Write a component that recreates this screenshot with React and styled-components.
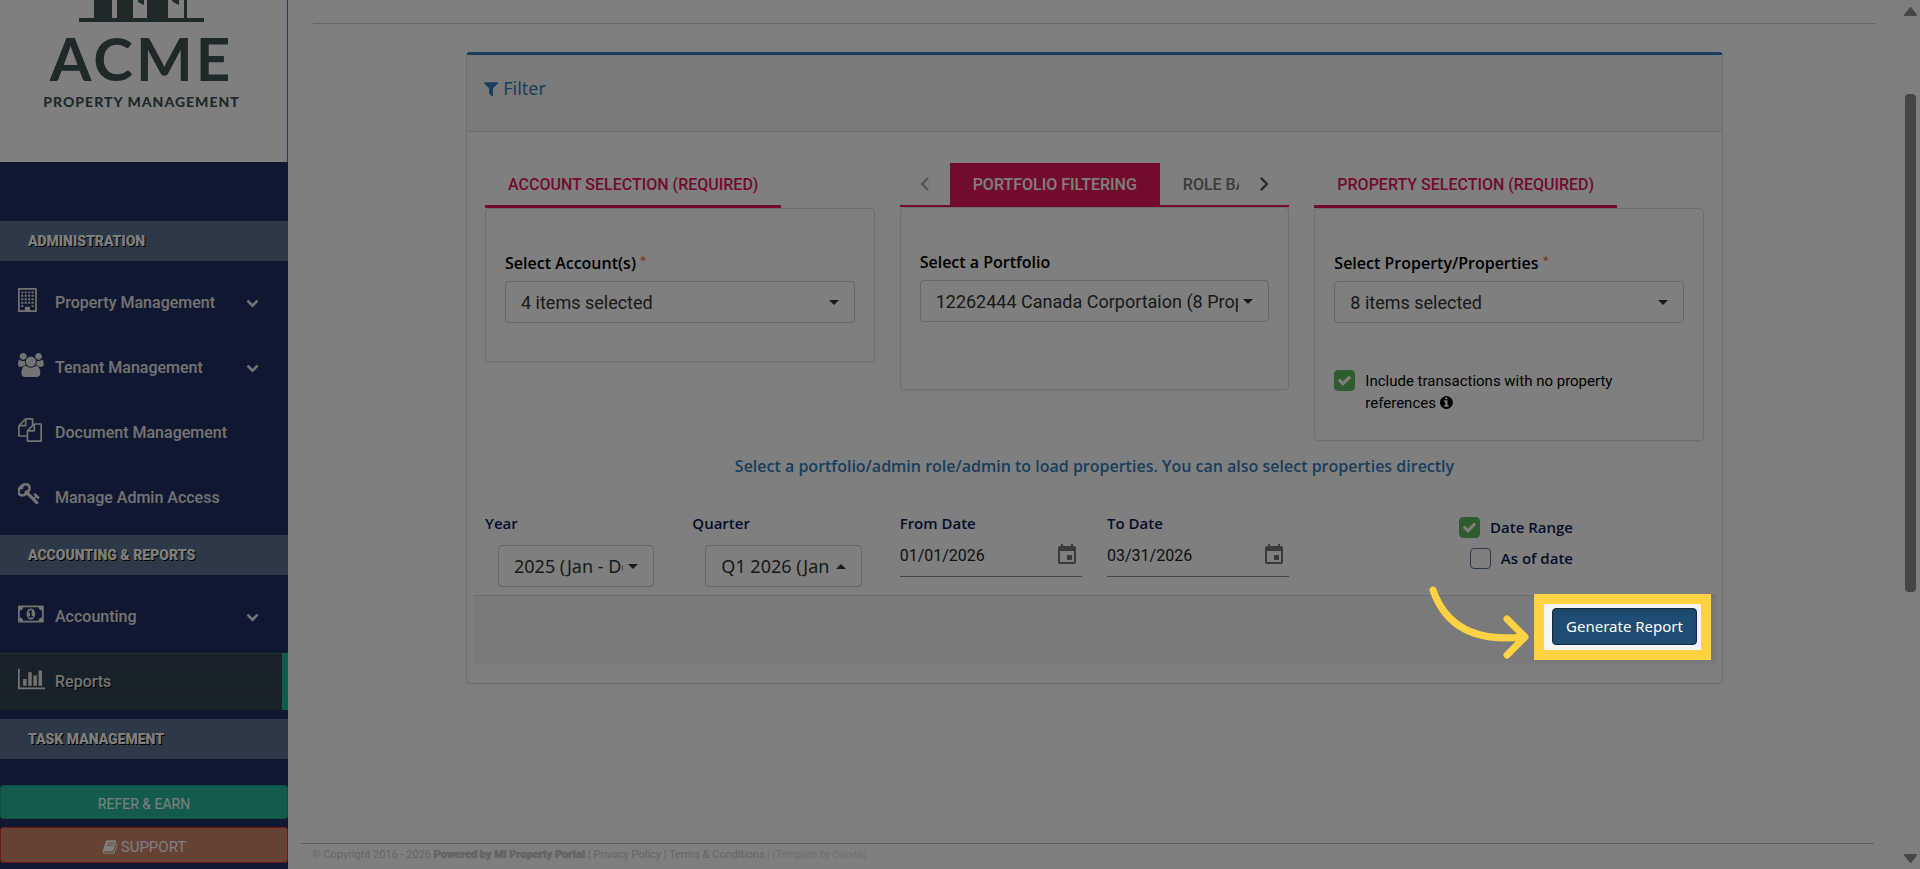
import React, { useState } from "react";
import styled, { createGlobalStyle } from "styled-components";

const GlobalStyle = createGlobalStyle`
    * {
        box-sizing: border-box;
    }

    body {
        margin: 0;
        background: #FFF;
        color: #333;
        font-family: Roboto, "Liberation Sans", sans-serif;
        font-size: 16px;
    }

    button, input, select {
        font: inherit;
        color: inherit;
    }
`;

const humanist = `"Noto Sans", "Open Sans", sans-serif`;
const humanistBold = `"Open Sans", "Noto Sans", sans-serif`;

const icons = {
    building: ["0 0 1408 1792", "M64 0h1280q26 0 45 19t19 45v1664q0 26-19 45t-45 19H64q-26 0-45-19t-19-45V64q0-26 19-45T64 0zM128 128v1536h384v-224q0-32 32-32h320q32 0 32 32v224h384V128zM240 256h160v144H240zM496 256h160v144H496zM752 256h160v144H752zM1008 256h160v144h-160zM240 512h160v144H240zM496 512h160v144H496zM752 512h160v144H752zM1008 512h160v144h-160zM240 768h160v144H240zM496 768h160v144H496zM752 768h160v144H752zM1008 768h160v144h-160zM240 1024h160v144H240zM496 1024h160v144H496zM752 1024h160v144H752zM1008 1024h160v144h-160zM240 1280h160v144H240zM1008 1280h160v144h-160z"],
    users: ["0 0 1920 1792", "M593 896q-162 5-265 128h-134q-82 0-138-40.5t-56-118.5q0-353 124-353 6 0 43.5 21t97.5 42.5 119 21.5q67 0 133-23-5 37-5 66 0 139 81 256zm1071 637q0 120-73 189.5t-194 69.5h-874q-121 0-194-69.5t-73-189.5q0-53 3.5-103.5t14-109 26.5-108.5 43-97.5 62-81 85.5-53.5 111.5-20q10 0 43 21.5t73 48 107 48 135 21.5 135-21.5 107-48 73-48 43-21.5q61 0 111.5 20t85.5 53.5 62 81 43 97.5 26.5 108.5 14 109 3.5 103.5zm-1024-1277q0 106-75 181t-181 75-181-75-75-181 75-181 181-75 181 75 75 181zm704 384q0 159-112.5 271.5t-271.5 112.5-271.5-112.5-112.5-271.5 112.5-271.5 271.5-112.5 271.5 112.5 112.5 271.5zm576 225q0 78-56 118.5t-138 40.5h-134q-103-123-265-128 81-117 81-256 0-29-5-66 66 23 133 23 59 0 119-21.5t97.5-42.5 43.5-21q124 0 124 353zm-128-609q0 106-75 181t-181 75-181-75-75-181 75-181 181-75 181 75 75 181z"],
    files: ["0 0 1792 1792", "M1696 384q40 0 68 28t28 68v1216q0 40-28 68t-68 28h-960q-40 0-68-28t-28-68v-288h-544q-40 0-68-28t-28-68v-672q0-40 20-88t48-76l408-408q28-28 76-48t88-20h416q40 0 68 28t28 68v328q68-40 128-40h416zm-544 213l-299 299h299v-299zm-640-384l-299 299h299v-299zm196 647l316-316v-416h-384v416q0 40-28 68t-68 28h-416v640h512v-256q0-40 20-88t48-76zm956 804v-1152h-384v416q0 40-28 68t-68 28h-416v640h896z"],
    key: ["64 128 1792 1792", "M832 512q0-80-56-136t-136-56-136 56-56 136q0 42 19 83-41-19-83-19-80 0-136 56t-56 136 56 136 136 56 136-56 56-136q0-42-19-83 41 19 83 19 80 0 136-56t56-136zm851 704q0 17-49 66t-66 49q-9 0-28.5-16t-36.5-33-38.5-40-24.5-26l-96 96 220 220q28 28 28 68 0 42-39 81t-81 39q-40 0-68-28l-671-671q-176 131-365 131-163 0-265.5-102.5t-102.5-265.5q0-160 95-313t248-248 313-95q163 0 265.5 102.5t102.5 265.5q0 189-131 365l355 355 96-96q-3-3-26-24.5t-40-38.5-33-36.5-16-28.5q0-17 49-66t66-49q13 0 23 10 6 6 46 44.5t82 79.5 86.5 86 73 78 28.5 41z"],
    money: ["0 0 1920 1792", "M768 1152h384v-96h-128v-448h-114l-148 137 77 80q42-37 55-57h2v288h-128v96zm512-256q0 70-21 142t-59.5 134-101.5 101-138 39-138-39-101.5-101-59.5-134-21-142 21-142 59.5-134 101.5-101 138-39 138 39 101.5 101 59.5 134 21 142zm512 256v-512q-106 0-181-75t-75-181h-1152q0 106-75 181t-181 75v512q106 0 181 75t75 181h1152q0-106 75-181t181-75zm128-832v1152q0 26-19 45t-45 19h-1792q-26 0-45-19t-19-45v-1152q0-26 19-45t45-19h1792q26 0 45 19t19 45z"],
    chart: ["0 0 2048 1792", "M640 896v512h-256v-512h256zm384-512v1024h-256v-1024h256zm1024 1152v128h-2048v-1536h128v1408h1920zm-640-896v768h-256v-768h256zm384-384v1152h-256v-1152h256z"],
    chevron: ["0 0 1792 1792", "M1683 808l-742 741q-19 19-45 19t-45-19l-742-741q-19-19-19-45.5t19-45.5l166-165q19-19 45-19t45 19l531 531 531-531q19-19 45-19t45 19l166 165q19 19 19 45.5t-19 45.5z"],
    filter: ["192 128 1408 1792", "M1595 295q17 41-14 70l-493 493v742q0 42-39 59-13 5-25 5-27 0-45-19l-256-256q-19-19-19-45v-486l-493-493q-31-29-14-70 17-39 59-39h1280q42 0 59 39z"],
    info: ["128 0 1536 1792", "M1152 1376v-160q0-14-9-23t-23-9h-96v-512q0-14-9-23t-23-9h-320q-14 0-23 9t-9 23v160q0 14 9 23t23 9h96v320h-96q-14 0-23 9t-9 23v160q0 14 9 23t23 9h448q14 0 23-9t9-23zm-128-896v-160q0-14-9-23t-23-9h-192q-14 0-23 9t-9 23v160q0 14 9 23t23 9h192q14 0 23-9t9-23zm640 416q0 209-103 385.5t-279.5 279.5-385.5 103-385.5-103-279.5-279.5-103-385.5 103-385.5 279.5-279.5 385.5-103 385.5 103 279.5 279.5 103 385.5z"],
    check: ["0 0 1792 1792", "M1671 566q0 40-28 68l-724 724-136 136q-28 28-68 28t-68-28l-136-136-362-362q-28-28-28-68t28-68l136-136q28-28 68-28t68 28l294 295 656-657q28-28 68-28t68 28l136 136q28 28 28 68z"],
    book: ["0 0 1792 1792", "M1703 478q40 57 18 129l-275 906q-19 64-76.5 107.5t-122.5 43.5h-923q-77 0-148.5-53.5t-99.5-131.5q-24-67-2-127 0-4 3-27t4-37q1-8-3-21.5t-3-19.5q2-11 8-21t16.5-23.5 16.5-23.5q23-38 45-91.5t30-91.5q3-10 .5-30t-.5-28q3-11 17-28t17-23q21-36 42-92t25-90q1-9-2.5-32t.5-28q4-13 22-30.5t22-22.5q19-26 42.5-84.5t27.5-96.5q1-8-3-25.5t-2-26.5q2-8 9-18t18-23 17-21q8-12 16.5-30.5t15-35 16-36 19.5-32 26.5-23.5 36-11.5 47.5 5.5l-1 3q38-9 51-9h761q74 0 114 56t18 130l-274 906q-36 119-71.5 153.5t-128.5 34.5h-869q-27 0-38 15-11 16-1 43 24 70 144 70h923q29 0 56-15.5t35-41.5l300-987q7-22 5-57 38 15 59 43zm-1064 2q-4 13 2 22.5t20 9.5h608q13 0 25.5-9.5t16.5-22.5l21-64q4-13-2-22.5t-20-9.5h-608q-13 0-25.5 9.5t-16.5 22.5zm-83 256q-4 13 2 22.5t20 9.5h608q13 0 25.5-9.5t16.5-22.5l21-64q4-13-2-22.5t-20-9.5h-608q-13 0-25.5 9.5t-16.5 22.5z"],
    event: ["0 0 24 24", "M17 12h-5v5h5v-5zM16 1v2H8V1H6v2H5c-1.11 0-1.99.9-1.99 2L3 19c0 1.1.89 2 2 2h14c1.1 0 2-.9 2-2V5c0-1.1-.9-2-2-2h-1V1h-2zm3 18H5V8h14v11z"],
    left: ["0 0 24 24", "M15.41 16.59L10.83 12l4.58-4.59L14 6l-6 6 6 6 1.41-1.41z"],
    right: ["0 0 24 24", "M8.59 16.59L13.17 12 8.59 7.41 10 6l6 6-6 6-1.41-1.41z"],
};

const Svg = styled.svg`
    display: block;
    flex: none;
    height: ${({ $size }) => $size}px;
    fill: currentColor;
    fill-rule: ${({ $evenOdd }) => ($evenOdd ? "evenodd" : "nonzero")};
`;

const Icon = ({ name, size }) => (
    <Svg viewBox={icons[name][0]} $size={size} $evenOdd={name === "building"} aria-hidden="true">
        <path d={icons[name][1]} />
    </Svg>
);

const Page = styled.div`
    display: grid;
    grid-template-columns: 288px minmax(0, 1fr) 20px;
    min-height: 100vh;
    overflow: hidden;
`;

/* ---------- sidebar ---------- */

const Sidebar = styled.aside`
    display: flex;
    flex-direction: column;
    background: #202E60;
    color: #E7E7E7;
`;

const Brand = styled.div`
    display: flex;
    flex-direction: column;
    align-items: center;
    height: 162px;
    margin-bottom: 59px;
    padding-right: 4px;
    background: #FFF;
    border-right: 1px solid #5A738E;
    color: #405252;
    font-family: Lato, sans-serif;
    font-weight: 700;
`;

const BrandArt = styled.svg`
    display: block;
    width: 125px;
    height: 22px;
    fill: currentColor;
`;

const BrandName = styled.div`
    font-size: 60px;
    line-height: 72px;
    letter-spacing: 3px;
`;

const BrandLine = styled.div`
    font-size: 14px;
    font-weight: 900;
    line-height: 16px;
    letter-spacing: 1px;
`;

const SectionTitle = styled.h3`
    margin: 0;
    padding: 0 28px;
    background: #5A738E;
    color: #FFF;
    font-size: 14px;
    font-weight: 900;
    line-height: 40px;
    text-transform: uppercase;
    text-shadow: 1px 1px #000;
`;

const Menu = styled.nav`
    display: flex;
    flex-direction: column;
    gap: 8px;
    padding: 13px 0 9px;
`;

const MenuLink = styled.a`
    display: flex;
    align-items: center;
    height: 57px;
    padding: 0 29px 0 18px;
    color: inherit;
    font-weight: 500;
    text-decoration: none;
    ${({ $active }) =>
        $active &&
        `
        padding-right: 23px;
        border-right: 6px solid #1ABB9C;
        background: linear-gradient(#334556, #2F444F);
        box-shadow: inset 0 1px 0 rgba(255, 255, 255, 0.16);
        text-shadow: 1px 1px #000;
    `}
`;

const MenuIcon = styled.span`
    display: flex;
    width: 37px;
    padding-bottom: 6px;
`;

const MenuText = styled.span`
    flex: 1;
`;

const SideButtons = styled.div`
    display: flex;
    flex-direction: column;
    gap: 8px;
    margin-top: auto;
    padding-bottom: 6px;
`;

const SideButton = styled.button`
    display: flex;
    align-items: center;
    justify-content: center;
    gap: 3px;
    height: ${({ $danger }) => ($danger ? 36 : 34)}px;
    padding: 3px 0 0;
    border: 1px solid ${({ $danger }) => ($danger ? "#D9302A" : "#169F85")};
    border-radius: 3px;
    background: ${({ $danger }) => ($danger ? "#CC846A" : "#26B99A")};
    color: #FFF;
    font-size: ${({ $danger }) => ($danger ? 15 : 14)}px;
`;

/* ---------- content ---------- */

const Main = styled.main`
    display: flex;
    flex-direction: column;
`;

const Rule = styled.hr`
    width: auto;
    margin: 23px 24px 28px 25px;
    border: 0;
    border-top: 1px solid #CCC;
`;

const Panel = styled.section`
    margin: 0 177px 0 178px;
    padding-bottom: 19px;
    border: 1px solid #DDD;
    border-top: 3px solid #337AB7;
    border-radius: 4px;
    box-shadow: 0 1px 1px rgba(0, 0, 0, 0.05);
`;

const PanelHead = styled.h2`
    display: flex;
    align-items: flex-start;
    gap: 5px;
    height: 77px;
    margin: 0;
    padding: 20px 17px;
    border-bottom: 1px solid #DDD;
    background: #F5F5F5;
    color: #337AB7;
    font: 400 18px/26px ${humanist};

    svg {
        margin-top: 6px;
    }
`;

const Columns = styled.div`
    display: grid;
    grid-template-columns: repeat(3, minmax(0, 1fr));
    align-items: start;
    gap: 25px;
    padding: 31px 18px 0;
`;

const TabBar = styled.div`
    display: flex;
    height: ${({ $lined }) => ($lined ? 44 : 45)}px;
    border-bottom: ${({ $lined }) => ($lined ? "2px solid #E4165A" : "0")};
`;

const Tab = styled.button`
    flex: none;
    padding: 0 23px;
    border: 0;
    border-bottom: ${({ $underline }) => ($underline ? "3px solid #E4165A" : "0")};
    background: ${({ $filled }) => ($filled ? "#E4165A" : "none")};
    color: ${({ $filled, $underline }) => ($filled ? "#FFF" : $underline ? "#E4165A" : "#777")};
    font-weight: 500;
    white-space: nowrap;
`;

const TabScroller = styled.div`
    display: flex;
    flex: 1;
    min-width: 0;
    overflow: hidden;
`;

const TabArrow = styled.button`
    display: flex;
    align-items: center;
    justify-content: center;
    width: 50px;
    padding: 0;
    border: 0;
    background: none;
    color: #555;

    &:disabled {
        color: #AAA;
    }
`;

const Card = styled.div`
    padding: 42px 19px ${({ $bottom }) => $bottom}px;
    border: 1px solid #DDD;
    border-radius: 4px;
    box-shadow: 0 1px 1px rgba(0, 0, 0, 0.05);
`;

const CardLabel = styled.label`
    display: block;
    margin-bottom: 6px;
    color: #000;
    font: 600 16px/24px ${humanistBold};
`;

const Required = styled.sup`
    color: #E74C3C;
    font-size: 11px;
    font-weight: 400;
    line-height: 0;
    vertical-align: 5px;
`;

const SelectBox = styled.div`
    position: relative;

    &::after {
        content: "";
        position: absolute;
        top: 19px;
        right: 16px;
        border: 5px solid transparent;
        border-top-color: #333;
        border-bottom-width: 0;
        ${({ $open }) => $open && "transform: rotate(180deg);"}
        pointer-events: none;
    }
`;

const Select = styled.select`
    display: block;
    width: 100%;
    height: 42px;
    padding: 0 30px 0 15px;
    appearance: none;
    border: 1px solid #CCC;
    border-radius: 4px;
    background: #FFF;
    font-family: ${({ $humanist }) => ($humanist ? humanist : "inherit")};
    font-size: 18px;
`;

const CheckLabel = styled.label`
    display: flex;
    align-items: flex-start;
    gap: 10px;
    color: ${({ $bold }) => ($bold ? "#0B1A55" : "#000")};
    font: ${({ $bold }) => ($bold ? `600 15px/21px ${humanistBold}` : "400 15px/22px Roboto, sans-serif")};
`;

const CardCheck = styled.div`
    margin-top: 47px;
    padding-right: 48px;

    svg {
        display: inline-block;
        vertical-align: -2px;
    }
`;

const CheckCell = styled.span`
    display: grid;
    flex: none;
    place-items: center;
    width: 21px;
    height: 21px;
    color: #FFF;

    > * {
        grid-area: 1 / 1;
    }

    svg {
        pointer-events: none;
    }
`;

const CheckInput = styled.input`
    width: 21px;
    height: 21px;
    margin: 0;
    appearance: none;
    border: 1px solid #5A738E;
    border-radius: 4px;

    &:checked {
        border-color: #5CB85C;
        background: #5CB85C;
    }
`;

const Hint = styled.p`
    margin: 13px 18px 0;
    color: #337AB7;
    font: 600 16px/24px ${humanistBold};
    text-align: center;
`;

const Fields = styled.div`
    display: grid;
    grid-template-columns: repeat(6, minmax(0, 1fr));
    gap: 25px;
    padding: 34px 18px 8px;
`;

const Field = styled.div`
    display: flex;
    flex-direction: column;

    ${SelectBox} {
        margin: 11px 13px 0;
    }
`;

const FieldLabel = styled.label`
    color: #0B1A55;
    font: 600 15px/22px ${humanistBold};
`;

const DateBox = styled.div`
    display: flex;
    align-items: center;
    height: 43px;
    padding-right: 3px;
    border-bottom: 1px solid #8A8A8A;
    color: #222;
`;

const DateInput = styled.input`
    flex: 1;
    min-width: 0;
    padding: 0;
    border: 0;
    background: none;
`;

const IconButton = styled.button`
    padding: 0;
    border: 0;
    background: none;
    color: #757575;
`;

const Modes = styled.div`
    display: flex;
    flex-direction: column;
    grid-column: span 2;
    align-items: flex-end;
    gap: 10px;
    padding: 5px 131px 0 0;
`;

const PanelFoot = styled.div`
    display: flex;
    justify-content: flex-end;
    margin: 0 6px;
    padding: 12px 19px 19px;
    border-top: 1px solid #DDD;
    border-radius: 0 0 3px 3px;
    background: #F5F5F5;
`;

/* spotlight: the spread shadow dims everything outside the frame */
const Spotlight = styled.div`
    position: relative;
    z-index: 10;

    &::after {
        content: "";
        position: absolute;
        inset: -14px -14px -15px -18px;
        border: 10px solid #FFD143;
        box-shadow: 0 0 0 3000px rgba(0, 0, 0, 0.5);
        pointer-events: none;
    }
`;

const Pointer = styled.svg`
    position: absolute;
    z-index: 1;
    top: -23px;
    right: 167px;
    width: 102px;
    height: 76px;
    fill: none;
    stroke: #FFD143;
    stroke-width: 7;
    stroke-linecap: round;
    stroke-linejoin: round;
`;

const Generate = styled.button`
    display: block;
    width: 145px;
    height: 37px;
    padding: 0 0 2px;
    border: 1px solid #122B40;
    border-radius: 4px;
    background: #204D74;
    box-shadow: inset 0 3px 5px rgba(0, 0, 0, 0.125);
    color: #FFF;
    font: 400 15px/22px ${humanist};
`;

const Footer = styled.footer`
    margin: auto 26px 0 13px;
    padding: 4px 11px 7px;
    border-top: 1px solid #BBB;
    color: #CACACA;
    font-size: 11px;
    line-height: 14px;
    white-space: nowrap;

    a {
        color: inherit;
        text-decoration: none;
    }

    strong {
        text-shadow: 0 0 1px #AAA;
    }

    small {
        color: #DDD;
        font-size: 10px;
    }

    small a {
        font-size: 9px;
    }
`;

const ScrollTrack = styled.div`
    display: flex;
    flex-direction: column;
    align-items: center;
    padding: 6px 0 5px 1px;
    background: #FCFCFC;
`;

const ScrollThumb = styled.div`
    width: 11px;
    height: 58%;
    margin: 78px 0 auto;
    border-radius: 4px;
    background: #8A8A8A;
`;

const ScrollArrow = styled.svg`
    display: block;
    width: 13px;
    height: 10px;
    fill: #8A8A8A;
    stroke: #8A8A8A;
    stroke-width: 2;
    stroke-linejoin: round;
`;

const adminItems = [
    { icon: "building", text: "Property Management", more: true },
    { icon: "users", text: "Tenant Management", more: true },
    { icon: "files", text: "Document Management" },
    { icon: "key", text: "Manage Admin Access" },
];

const reportItems = [
    { icon: "money", text: "Accounting", more: true },
    { icon: "chart", text: "Reports", active: true },
];

const MenuGroup = ({ title, items }) => (
    <>
        <SectionTitle>{title}</SectionTitle>
        {items && (
            <Menu>
                {items.map((item) => (
                    <MenuLink key={item.text} href="#" $active={item.active}>
                        <MenuIcon><Icon name={item.icon} size={24} /></MenuIcon>
                        <MenuText>{item.text}</MenuText>
                        {item.more && <Icon name="chevron" size={13} />}
                    </MenuLink>
                ))}
            </Menu>
        )}
    </>
);

const Dropdown = ({ id, text, open, humanist: human }) => (
    <SelectBox $open={open}>
        <Select id={id} $humanist={human}>
            <option>{text}</option>
        </Select>
    </SelectBox>
);

const Check = ({ checked, onChange, bold, children }) => (
    <CheckLabel $bold={bold}>
        <CheckCell>
            <CheckInput type="checkbox" checked={checked} onChange={onChange} />
            {checked && <Icon name="check" size={15} />}
        </CheckCell>
        <span>{children}</span>
    </CheckLabel>
);

const DateField = ({ id, label, value }) => (
    <Field>
        <FieldLabel htmlFor={id}>{label}</FieldLabel>
        <DateBox>
            <DateInput id={id} defaultValue={value} />
            <IconButton type="button" aria-label={`Choose ${label}`}>
                <Icon name="event" size={24} />
            </IconButton>
        </DateBox>
    </Field>
);

const App = () => {
    const [noProperty, setNoProperty] = useState(true);
    const [mode, setMode] = useState("range");

    return (
        <Page>
            <GlobalStyle />
            <Sidebar>
                <Brand>
                    <BrandArt viewBox="0 0 125 22" aria-hidden="true">
                        <path d="M0 18H125V22H0zM15 0H33V18H15zM38 0H54V18H38zM68 0H89V18H68zM105 0H108V18H105zM59 0H65V5Q61 3 59 2zM93 0H100V5Q95 3 93 1z" />
                    </BrandArt>
                    <BrandName>ACME</BrandName>
                    <BrandLine>PROPERTY MANAGEMENT</BrandLine>
                </Brand>
                <MenuGroup title="Administration" items={adminItems} />
                <MenuGroup title="Accounting & Reports" items={reportItems} />
                <MenuGroup title="Task Management" />
                <SideButtons>
                    <SideButton type="button">REFER &amp; EARN</SideButton>
                    <SideButton type="button" $danger>
                        <Icon name="book" size={16} />
                        SUPPORT
                    </SideButton>
                </SideButtons>
            </Sidebar>

            <Main>
                <Rule />
                <Panel>
                    <PanelHead>
                        <Icon name="filter" size={18} />
                        Filter
                    </PanelHead>

                    <Columns>
                        <div>
                            <TabBar>
                                <Tab type="button" $underline>ACCOUNT SELECTION (REQUIRED)</Tab>
                            </TabBar>
                            <Card $bottom={38}>
                                <CardLabel htmlFor="accounts">
                                    Select Account(s) <Required>*</Required>
                                </CardLabel>
                                <Dropdown id="accounts" text="4 items selected" />
                            </Card>
                        </div>

                        <div>
                            <TabBar $lined>
                                <TabArrow type="button" disabled aria-label="Previous tabs">
                                    <Icon name="left" size={28} />
                                </TabArrow>
                                <TabScroller>
                                    <Tab type="button" $filled>PORTFOLIO FILTERING</Tab>
                                    <Tab type="button">ROLE BASED</Tab>
                                </TabScroller>
                                <TabArrow type="button" aria-label="Next tabs">
                                    <Icon name="right" size={28} />
                                </TabArrow>
                            </TabBar>
                            <Card $bottom={67}>
                                <CardLabel htmlFor="portfolio">Select a Portfolio</CardLabel>
                                <Dropdown id="portfolio" text="12262444 Canada Corportaion (8 Properties)" />
                            </Card>
                        </div>

                        <div>
                            <TabBar>
                                <Tab type="button" $underline>PROPERTY SELECTION (REQUIRED)</Tab>
                            </TabBar>
                            <Card $bottom={26}>
                                <CardLabel htmlFor="properties">
                                    Select Property/Properties <Required>*</Required>
                                </CardLabel>
                                <Dropdown id="properties" text="8 items selected" />
                                <CardCheck>
                                    <Check checked={noProperty} onChange={() => setNoProperty(!noProperty)}>
                                        Include transactions with no property references <Icon name="info" size={15} />
                                    </Check>
                                </CardCheck>
                            </Card>
                        </div>
                    </Columns>

                    <Hint>
                        Select a portfolio/admin role/admin to load properties. You can also select properties directly
                    </Hint>

                    <Fields>
                        <Field>
                            <FieldLabel htmlFor="year">Year</FieldLabel>
                            <Dropdown id="year" text="2025 (Jan - Dec)" humanist />
                        </Field>
                        <Field>
                            <FieldLabel htmlFor="quarter">Quarter</FieldLabel>
                            <Dropdown id="quarter" text="Q1 2026 (Jan - Mar)" humanist open />
                        </Field>
                        <DateField id="from" label="From Date" value="01/01/2026" />
                        <DateField id="to" label="To Date" value="03/31/2026" />
                        <Modes>
                            <Check bold checked={mode === "range"} onChange={() => setMode("range")}>
                                Date Range
                            </Check>
                            <Check bold checked={mode === "asof"} onChange={() => setMode("asof")}>
                                As of date
                            </Check>
                        </Modes>
                    </Fields>

                    <PanelFoot>
                        <Spotlight>
                            <Generate type="button">Generate Report</Generate>
                            <Pointer viewBox="0 0 102 76" aria-hidden="true">
                                <path d="M5 5C17 40 46 57 94 52M79 34L97 52L79 70" />
                            </Pointer>
                        </Spotlight>
                    </PanelFoot>
                </Panel>

                <Footer>
                    © Copyright 2016 - 2026 <strong>Powered by Mi Property Portal</strong> | <a href="#">Privacy Policy</a> |{" "}
                    <a href="#">Terms &amp; Conditions</a> <small>| (Template by <a href="#">Colorlib</a>)</small>
                </Footer>
            </Main>

            <ScrollTrack>
                <ScrollArrow viewBox="0 0 13 10"><path d="M1 9L6.5 2L12 9z" /></ScrollArrow>
                <ScrollThumb />
                <ScrollArrow viewBox="0 0 13 10"><path d="M1 1L6.5 8L12 1z" /></ScrollArrow>
            </ScrollTrack>
        </Page>
    );
};

export default App;
